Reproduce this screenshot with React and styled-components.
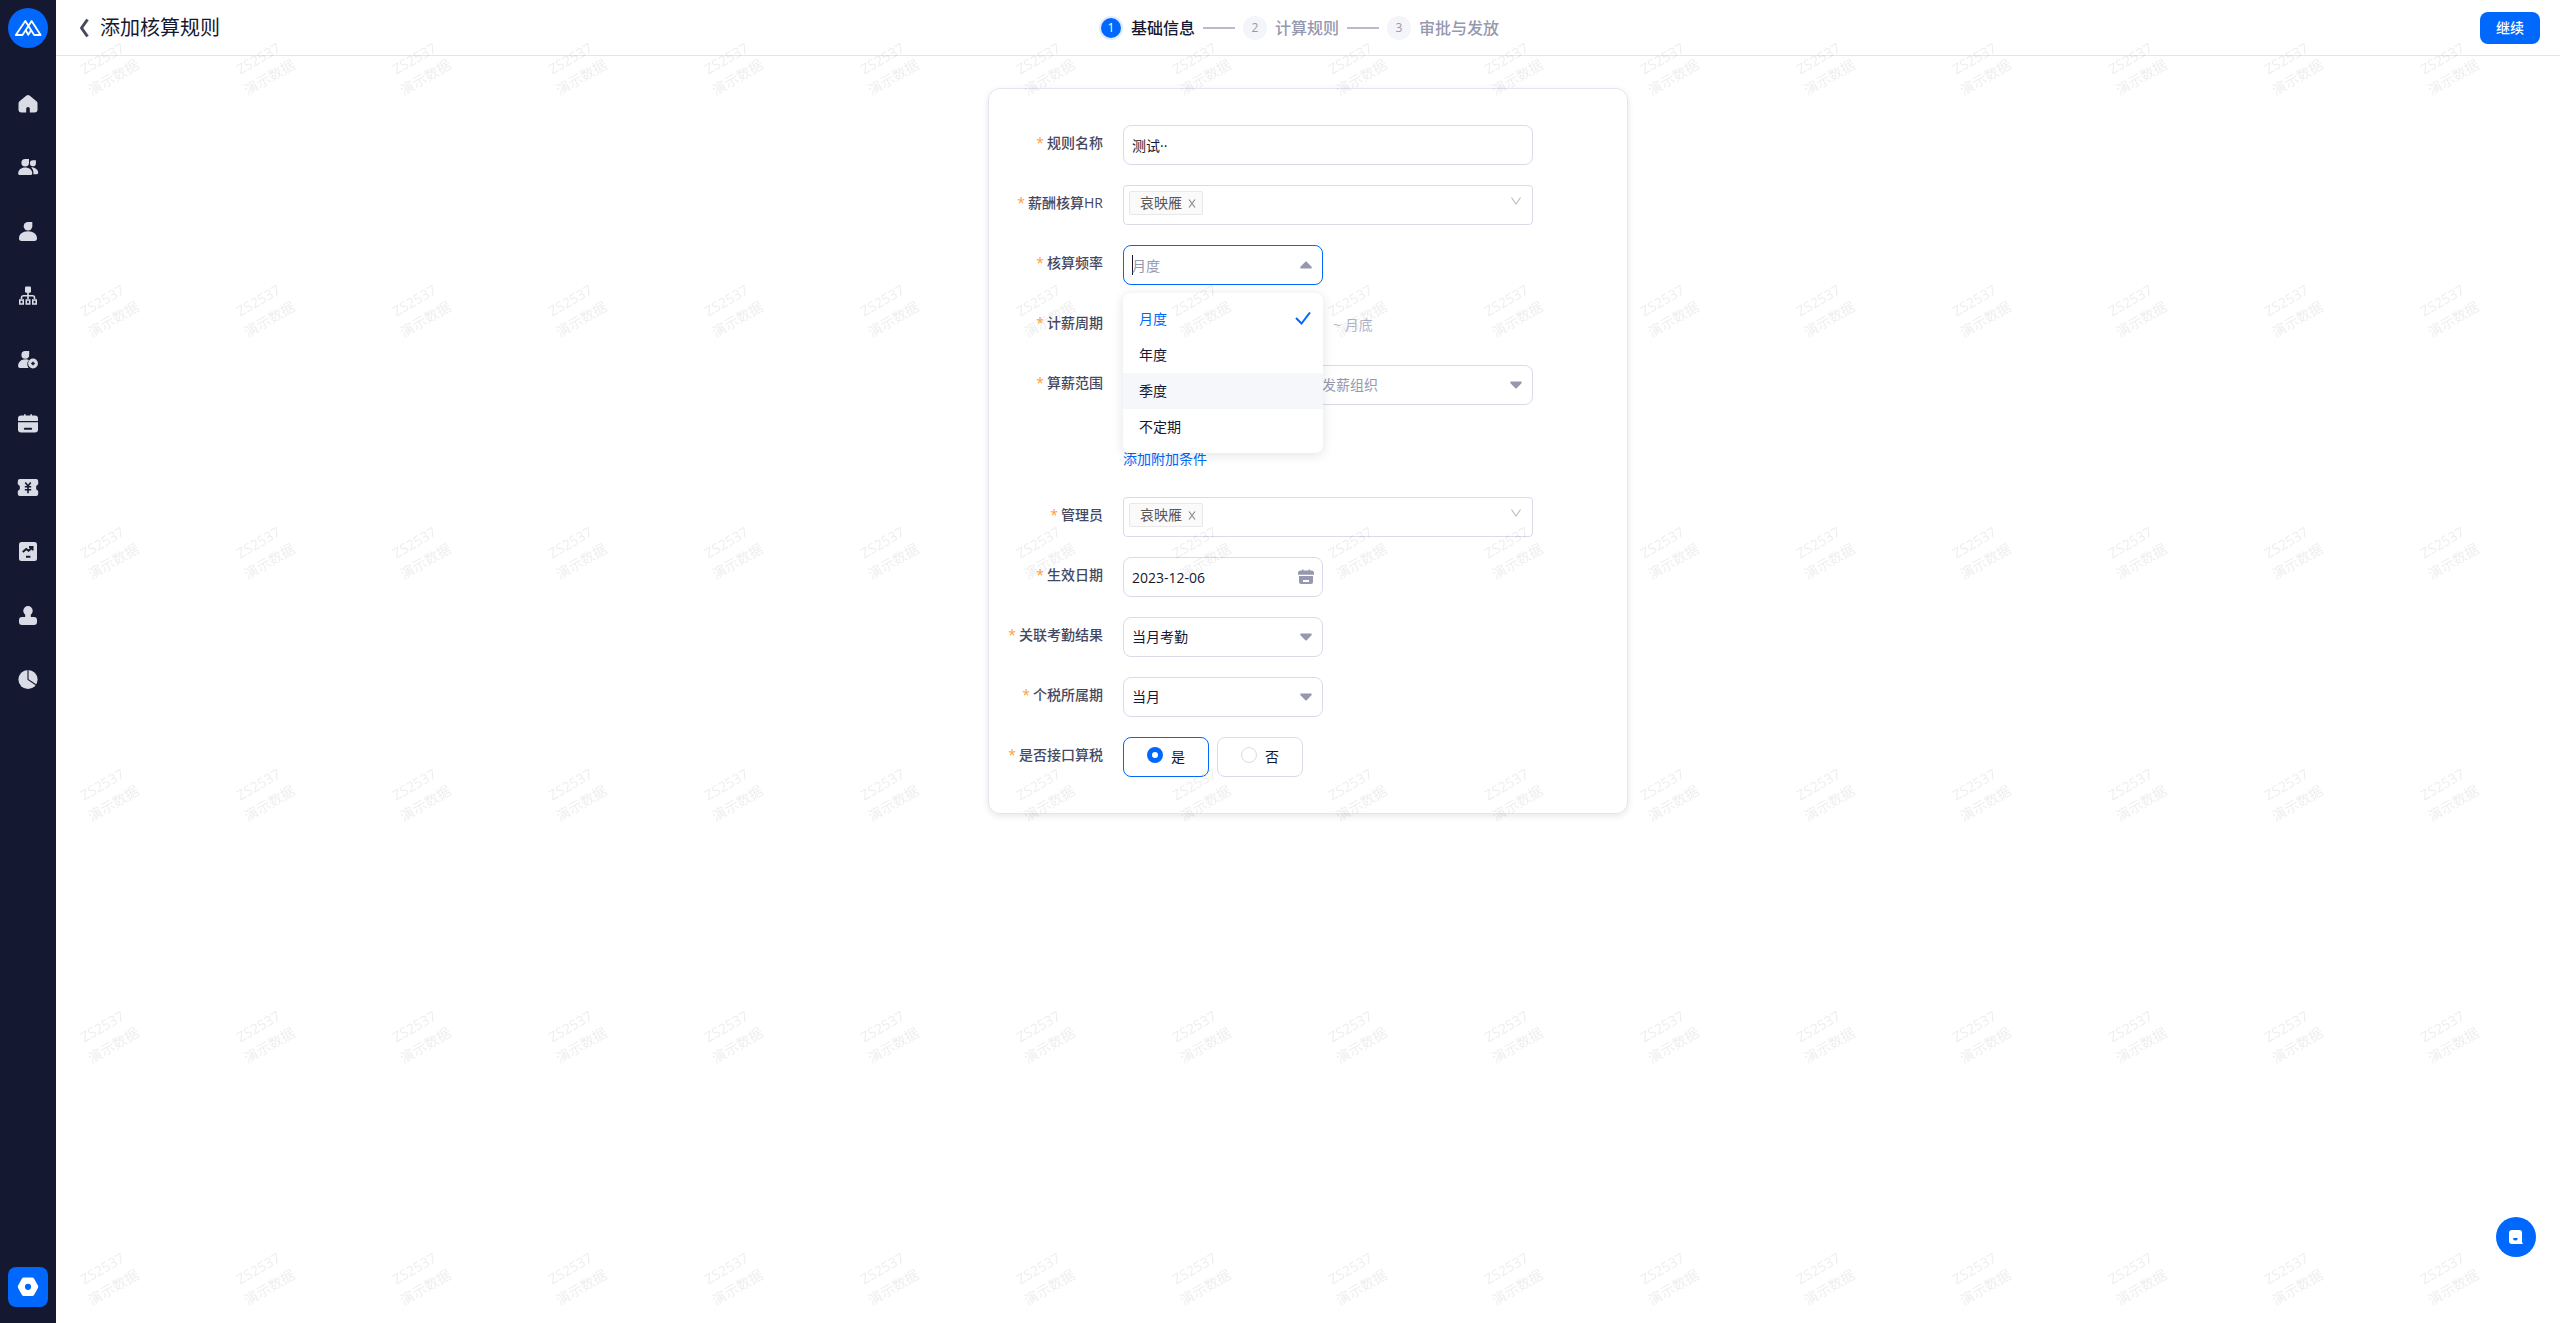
import React from "react";
import styled, { createGlobalStyle, css } from "styled-components";

const navItems = [
  { label: "首页", icon: "home" },
  { label: "员工", icon: "people" },
  { label: "个人", icon: "person" },
  { label: "组织", icon: "org" },
  { label: "招聘", icon: "personAdd" },
  { label: "考勤", icon: "calendar" },
  { label: "薪酬", icon: "ticket" },
  { label: "绩效", icon: "report" },
  { label: "审批", icon: "stamp" },
  { label: "报表", icon: "pie" },
];

const steps = ["基础信息", "计算规则", "审批与发放"];

const frequencies = ["月度", "年度", "季度", "不定期"];

const WATERMARK_TILES = 96;

//? Icons
const dark = "#141830";

const icons = {
  home: (
    <path d='M8.5 1.6a2.4 2.4 0 0 1 3 0l7 5.6c.7.6 1 1.3 1 2.2v6.1a3 3 0 0 1-3 3h-4.700V14.800a1.800 1.800 0 0 0-3.600 0v3.700H3.500a3 3 0 0 1-3-3V9.400c0-.9.4-1.700 1-2.200z' />
  ),
  people: (
    <>
      <path d='M7.2 1H11v3.800A3.800 3.800 0 1 1 7.200 1z' />
      <path d='M7.200 9.400c4 0 7 2.400 7 5.800 0 1.200-.7 1.900-1.900 1.900H2.100C.9 17.100.2 16.400.2 15.200c0-3.400 3-5.800 7-5.800z' />
      <path d='M15 2.300h2.900v2.900A3 3 0 1 1 15 2.300z' />
      <path d='M13.200 9.300c4 0 7 2.600 7 5.200 0 1-.5 1.700-1.500 1.700h-3.300c.3-2.900-.6-5.200-2.200-6.900z' />
    </>
  ),
  person: (
    <>
      <path d='M10 0h4.300v4.200A4.300 4.200 0 1 1 10 0z' />
      <path d='M10 9.300c5.400 0 9 2.900 9 7 0 1.800-.9 2.700-2.600 2.700H3.600C1.900 19 1 18.100 1 16.300c0-4.100 3.600-7 9-7z' />
    </>
  ),
  org: (
    <>
      <path d='M8 .6h4a1 1 0 0 1 1 1v3.600a1.500 1.500 0 0 1-1.500 1.500h-3A1.500 1.500 0 0 1 7 5.200V1.600a1 1 0 0 1 1-1z' />
      <path
        d='M10 5v8M3.500 13v-1.200A2 2 0 0 1 5.500 9.800h9a2 2 0 0 1 2 2V13M1.800 14h3.400v4H1.800zM8.300 14h3.400v4H8.300zM14.800 14h3.400v4h-3.400z'
        fill='none'
        stroke='currentColor'
        strokeWidth='1.600'
      />
    </>
  ),
  personAdd: (
    <>
      <path d='M7.500 1h3.700v4A3.900 3.900 0 1 1 7.500 1z' />
      <path d='M7.500 9.200c1.500 0 2.400.2 3.500.8-2.100 2-2.300 5-.5 7.900H2C.8 17.900.1 17.200.1 16c0-4 3-6.800 7.400-6.800z' />
      <circle cx='15' cy='13.500' r='4.900' />
      <path d='M15 11.700v3.600M13.200 13.500h3.600' stroke={dark} strokeWidth='1.500' />
    </>
  ),
  calendar: (
    <>
      <path d='M3 1.400h3V.3h1.600v1.100h4.800V.3H14v1.100h3a3 3 0 0 1 3 3V7H0V4.400a3 3 0 0 1 3-3z' />
      <path d='M0 8.200h20v7.400a3 3 0 0 1-3 3H3a3 3 0 0 1-3-3z' />
      <path d='M6.800 14.700h6.400' stroke={dark} strokeWidth='2' strokeLinecap='round' />
    </>
  ),
  ticket: (
    <>
      <path d='M2.200 1h15.600A2.200 2.200 0 0 1 20.200 3v3.200L18.200 8v3.200l2 1.800v3a2.200 2.200 0 0 1-2.400 2H2.200A2.200 2.200 0 0 1-.2 16v-3l2-1.800V8l-2-1.800V3A2.200 2.200 0 0 1 2.200 1z' />
      <path
        d='M7.300 4.500 10 8l2.700-3.500M10 8v7.300M6.800 8.800h6.400M6.800 11.800h6.400'
        fill='none'
        stroke={dark}
        strokeWidth='1.600'
      />
    </>
  ),
  report: (
    <>
      <rect x='1' y='0' width='18' height='19' rx='2.500' />
      <path
        d='m4.800 10 3.400-3 2.400 1.800L14 5.500M11 5h3.600v3.600M8 14.700h4.400'
        fill='none'
        stroke={dark}
        strokeWidth='1.900'
      />
    </>
  ),
  stamp: (
    <path d='M10 0a4.700 4.700 0 0 1 4.700 4.700c0 1.800-1 3-1.900 4v2.300H16a3 3 0 0 1 3 3V16a3 3 0 0 1-3 3H4a3 3 0 0 1-3-3v-2a3 3 0 0 1 3-3h3.200V8.700c-.9-1-1.900-2.200-1.900-4A4.700 4.700 0 0 1 10 0z' />
  ),
  pie: (
    <>
      <circle cx='10' cy='9.500' r='9.600' />
      <path d='M10 0v9.500l7.800 5.300' fill='none' stroke={dark} strokeWidth='1.100' />
    </>
  ),
};

const Logo = () => (
  <svg width='40' height='40' viewBox='0 0 40 40' aria-hidden='true'>
    <g
      fill='none'
      stroke='#fff'
      strokeWidth='1.800'
      strokeLinejoin='round'
      strokeLinecap='round'
    >
      <path d='M14.500 27H7.800l9.500-14 8.900 14h6.400L23.600 13z' />
      <path d='m17.900 22.500 2.400 4.300 2.600-4.300' />
    </g>
  </svg>
);

const CaretIcon = ({ up }) => (
  <svg width='12' height='8' viewBox='0 0 12 8' fill='#9698b0' aria-hidden='true'>
    {up ? (
      <path d='M5.300.8a1 1 0 0 1 1.400 0l4.800 5c.6.600.2 1.700-.7 1.700H1.200c-.9 0-1.300-1.100-.7-1.700z' />
    ) : (
      <path d='M5.300 7.200a1 1 0 0 0 1.400 0l4.800-5C12.100 1.600 11.700.5 10.800.5H1.200C.3.500-.1 1.600.5 2.200z' />
    )}
  </svg>
);

const ChevronIcon = () => (
  <svg width='12' height='8' viewBox='0 0 12 8' aria-hidden='true'>
    <path d='M1.500.5 6 7 10.500.5' fill='none' stroke='#bfbfbf' strokeWidth='1.200' />
  </svg>
);

const DateIcon = () => (
  <svg width='16' height='16' viewBox='0 0 16 16' fill='#9698b0' aria-hidden='true'>
    <path d='M2.500 1.500H4V.5h1.500v1h5v-1H12v1h1.500A2.500 2.500 0 0 1 16 4v1.800H0V4a2.500 2.500 0 0 1 2.500-2.500z' />
    <path
      fillRule='evenodd'
      d='M1 7h14v6a2 2 0 0 1-2 2H3a2 2 0 0 1-2-2zm4 4v2h6v-2z'
    />
  </svg>
);

//? Form parts
const FormRow = ({ id, label, children }) => (
  <Row>
    <Label htmlFor={id}>
      <Star>*</Star>
      {label}
    </Label>
    <Controls>{children}</Controls>
  </Row>
);

const SelectField = ({ id, width, muted, value, ariaLabel }) => (
  <Field $width={width}>
    <Select id={id} $muted={muted} defaultValue={value} aria-label={ariaLabel}>
      <option>{value}</option>
    </Select>
    <CaretIcon />
  </Field>
);

const PeopleField = ({ id, name }) => (
  <Field $square>
    <Tag>
      {name}
      <TagClose type='button' aria-label={`移除${name}`}>
        <svg width='8' height='10' viewBox='0 0 8 10' aria-hidden='true'>
          <path d='m1 1.500 6 8M7 1.500l-6 8' stroke='#8c8c8c' strokeWidth='1.200' />
        </svg>
      </TagClose>
    </Tag>
    <TextInput id={id} type='text' />
    <ChevronSlot>
      <ChevronIcon />
    </ChevronSlot>
  </Field>
);

const App = () => {
  return (
    <Page>
      <GlobalStyle />
      <Sidebar>
        <LogoLink href='#' aria-label='主页'>
          <Logo />
        </LogoLink>
        <Nav>
          {navItems.map(({ label, icon }) => (
            <NavLink key={icon} href='#' aria-label={label}>
              <svg width='20' height='20' viewBox='0 0 20 20' fill='currentColor' overflow='visible'>
                {icons[icon]}
              </svg>
            </NavLink>
          ))}
        </Nav>
        <SettingsButton type='button' aria-label='设置'>
          <svg width='22' height='20' viewBox='0 0 22 20'>
            <path
              fill='#fff'
              fillRule='evenodd'
              d='M7 .5h8a2.500 2.500 0 0 1 2.200 1.200l3.700 6.800a2.500 2.500 0 0 1 0 2.600l-3.700 6.700A2.500 2.500 0 0 1 15 19H7a2.500 2.500 0 0 1-2.200-1.200L1.100 11.100a2.500 2.500 0 0 1 0-2.600l3.700-6.800A2.500 2.500 0 0 1 7 .5zm4 6.200a3.100 3.100 0 1 0 0 6.200 3.100 3.100 0 0 0 0-6.200z'
            />
          </svg>
        </SettingsButton>
      </Sidebar>

      <Main>
        <Header>
          <TitleGroup>
            <BackButton type='button' aria-label='返回'>
              <svg width='12' height='20' viewBox='0 0 12 20'>
                <path
                  d='M9.500 1.500 3.500 10l6 8.500'
                  fill='none'
                  stroke='#454860'
                  strokeWidth='3'
                  strokeLinejoin='round'
                />
              </svg>
            </BackButton>
            <Title>添加核算规则</Title>
          </TitleGroup>
          <Steps>
            {steps.map((step, index) => (
              <Step key={step} $active={index === 0}>
                <StepNumber $active={index === 0}>{index + 1}</StepNumber>
                {step}
              </Step>
            ))}
          </Steps>
          <ContinueButton type='button'>继续</ContinueButton>
        </Header>

        <Content>
          <Card onSubmit={(e) => e.preventDefault()}>
            <FormRow id='name' label='规则名称'>
              <Field>
                <TextInput id='name' type='text' defaultValue='测试··' />
              </Field>
            </FormRow>
            <FormRow id='hr' label='薪酬核算HR'>
              <PeopleField id='hr' name='哀映雁' />
            </FormRow>
            <FormRow id='frequency' label='核算频率'>
              <DropdownAnchor>
                <Field $active>
                  <TextCursor />
                  <TextInput
                    id='frequency'
                    type='text'
                    role='combobox'
                    aria-expanded='true'
                    aria-controls='frequency-list'
                    placeholder='月度'
                  />
                  <CaretIcon up />
                </Field>
                <Dropdown id='frequency-list' role='listbox'>
                  {frequencies.map((item) => (
                    <Option
                      key={item}
                      role='option'
                      aria-selected={item === "月度"}
                      $selected={item === "月度"}
                      $hovered={item === "季度"}
                    >
                      {item}
                      {item === "月度" && (
                        <svg width='16' height='14' viewBox='0 0 16 14' aria-hidden='true'>
                          <path
                            d='m1 6 5.500 5.500L15 .5'
                            fill='none'
                            stroke='#0168fe'
                            strokeWidth='2'
                          />
                        </svg>
                      )}
                    </Option>
                  ))}
                </Dropdown>
              </DropdownAnchor>
            </FormRow>
            <FormRow id='cycle' label='计薪周期'>
              <SelectField id='cycle' width='200px' value='1日' />
              <Hint>~ 月底</Hint>
            </FormRow>
            <FormRow id='scope' label='算薪范围'>
              <SelectField id='scope' width='180px' value='发薪组织' />
              <SelectField width='220px' value='发薪组织' ariaLabel='发薪组织' muted />
            </FormRow>
            <ExtraRow>
              <a href='#'>添加附加条件</a>
            </ExtraRow>
            <FormRow id='admin' label='管理员'>
              <PeopleField id='admin' name='哀映雁' />
            </FormRow>
            <FormRow id='date' label='生效日期'>
              <Field $width='200px' $icon='wide'>
                <TextInput id='date' type='text' defaultValue='2023-12-06' />
                <DateIcon />
              </Field>
            </FormRow>
            <FormRow id='attendance' label='关联考勤结果'>
              <SelectField id='attendance' width='200px' value='当月考勤' />
            </FormRow>
            <FormRow id='tax' label='个税所属期'>
              <SelectField id='tax' width='200px' value='当月' />
            </FormRow>
            <FormRow id='api-yes' label='是否接口算税'>
              <RadioBox>
                <input id='api-yes' type='radio' name='api' defaultChecked />是
              </RadioBox>
              <RadioBox>
                <input type='radio' name='api' />否
              </RadioBox>
            </FormRow>
          </Card>
        </Content>
      </Main>

      <Watermark aria-hidden='true'>
        {Array.from({ length: WATERMARK_TILES }, (_, index) => (
          <WatermarkTile key={index}>
            <p>
              ZS2537
              <br />
              演示数据
            </p>
          </WatermarkTile>
        ))}
      </Watermark>

      <HelpButton type='button' aria-label='帮助'>
        <svg width='14' height='14' viewBox='0 0 14 14'>
          <path
            fill='#fff'
            fillRule='evenodd'
            d='M3 0h7.500A2.500 2.500 0 0 1 13 2.500V12l1 2H3a3 3 0 0 1-3-3V3a3 3 0 0 1 3-3zm1.200 8v.8a1.800 1.800 0 0 0 1.800 1.700h.8a1.800 1.800 0 0 0 1.800-1.700V8z'
          />
        </svg>
      </HelpButton>
    </Page>
  );
};

const GlobalStyle = createGlobalStyle`
  *,
  *::before,
  *::after {
    box-sizing: border-box;
  }

  body {
    margin: 0;
    background: #fff;
    color: #141830;
    font-family: "Open Sans", "Noto Sans CJK SC", sans-serif;
    font-size: 14px;
    line-height: 20px;
  }

  button,
  input,
  select {
    font: inherit;
    color: inherit;
  }

  a {
    color: #0168fe;
    text-decoration: none;
  }

  button {
    padding: 0;
    border: 0;
    background: none;
    cursor: pointer;
  }
`;

const Page = styled.div`
  display: flex;
  min-height: 100vh;
`;

const Sidebar = styled.aside`
  display: flex;
  flex-direction: column;
  align-items: center;
  flex: none;
  width: 56px;
  padding: 8px 8px 16px;
  background: #141830;
`;

const LogoLink = styled.a`
  display: block;
  width: 40px;
  height: 40px;
  border-radius: 50%;
  background: #0168fe;
`;

const Nav = styled.nav`
  display: flex;
  flex-direction: column;
  margin-top: 24px;
`;

const NavLink = styled.a`
  display: grid;
  place-items: center;
  width: 56px;
  height: 64px;
  color: #dadce5;
`;

const SettingsButton = styled.button`
  display: grid;
  place-items: center;
  width: 40px;
  height: 40px;
  margin-top: auto;
  border-radius: 8px;
  background: #0168fe;
`;

const Main = styled.main`
  flex: 1;
  min-width: 0;
`;

const Header = styled.header`
  display: grid;
  grid-template-columns: 1fr auto 1fr;
  align-items: center;
  height: 56px;
  padding: 0 20px;
  border-bottom: 1px solid #e4e4ee;
`;

const TitleGroup = styled.div`
  display: flex;
  align-items: center;
  gap: 8px;
`;

const BackButton = styled.button`
  display: grid;
  place-items: center;
  width: 16px;
  height: 24px;
`;

const Title = styled.h1`
  margin: 0;
  font-size: 20px;
  font-weight: 400;
  line-height: 28px;
`;

const Steps = styled.ol`
  display: flex;
  gap: 8px;
  margin: 0;
  padding: 0 18px 0 0;
  list-style: none;
`;

const Step = styled.li`
  display: flex;
  align-items: center;
  gap: 8px;
  color: ${({ $active }) => ($active ? "#141830" : "#9698b0")};
  font-size: 16px;
  font-weight: 500;
  line-height: 24px;

  &:not(:last-child)::after {
    content: "";
    width: 32px;
    height: 2px;
    background: #b8bacd;
  }
`;

const StepNumber = styled.span`
  width: 24px;
  height: 24px;
  border: 2px solid ${({ $active }) => ($active ? "#dfebff" : "#f4f5fb")};
  border-radius: 50%;
  background: ${({ $active }) => ($active ? "#0168fe" : "#f4f5fb")};
  color: ${({ $active }) => ($active ? "#fff" : "#9698b0")};
  font-size: 12px;
  line-height: 20px;
  text-align: center;
`;

const ContinueButton = styled.button`
  justify-self: end;
  width: 60px;
  height: 32px;
  border-radius: 8px;
  background: #0168fe;
  color: #fff;
  font-weight: 500;
`;

const Content = styled.div`
  display: flex;
  justify-content: center;
  padding: 32px 20px;
`;

const Card = styled.form`
  display: grid;
  gap: 20px;
  width: 100%;
  max-width: 640px;
  padding: 36px 94px 36px 0;
  border: 1px solid #e4e5f0;
  border-radius: 12px;
  box-shadow: 0 2px 6px rgba(20, 24, 48, 0.1);
`;

const Row = styled.div`
  display: grid;
  grid-template-columns: 114px 1fr;
  column-gap: 20px;
`;

const Label = styled.label`
  color: #454860;
  font-weight: 500;
  line-height: 36px;
  text-align: right;
  white-space: nowrap;
`;

const Star = styled.span`
  margin-right: 3px;
  color: #ff9d3c;
  font-weight: 400;
`;

const Controls = styled.div`
  display: flex;
  align-items: center;
  gap: 10px;
`;

const Field = styled.div`
  display: flex;
  align-items: center;
  width: ${({ $width }) => $width || "100%"};
  height: 40px;
  padding: 0 ${({ $icon }) => ($icon === "wide" ? 8 : 10)}px 0 8px;
  border: 1px solid #dadbe8;
  border-radius: 8px;
  background: #fff;

  ${({ $square }) =>
    $square &&
    css`
      padding-left: 5px;
      border-radius: 4px;
    `}

  ${({ $active }) =>
    $active &&
    css`
      border-color: #0168fe;
    `}
`;

const controlStyles = css`
  flex: 1;
  min-width: 0;
  height: 38px;
  padding: 0;
  border: 0;
  outline: 0;
  background: transparent;
`;

const TextInput = styled.input`
  ${controlStyles}

  &::placeholder {
    color: #9698b0;
    opacity: 1;
  }
`;

const Select = styled.select`
  ${controlStyles}
  appearance: none;
  color: ${({ $muted }) => ($muted ? "#9698b0" : "inherit")};
`;

const TextCursor = styled.span`
  width: 1px;
  height: 20px;
  margin-right: -1px;
  background: #141830;
`;

const Tag = styled.span`
  display: flex;
  align-items: center;
  gap: 6px;
  height: 24px;
  margin-bottom: 4px;
  padding: 0 6px 0 10px;
  border: 1px solid #e8e8e8;
  border-radius: 2px;
  background: #fafafa;
  color: #595959;
`;

const TagClose = styled.button`
  display: grid;
  place-items: center;
  width: 8px;
  height: 20px;
`;

const ChevronSlot = styled.span`
  display: grid;
  margin-bottom: 8px;
`;

const DropdownAnchor = styled.div`
  position: relative;
  width: 200px;
`;

const Dropdown = styled.ul`
  position: absolute;
  top: 48px;
  left: 0;
  z-index: 2;
  width: 100%;
  margin: 0;
  padding: 8px 0;
  border-radius: 8px;
  background: #fff;
  box-shadow: 0 2px 12px rgba(20, 24, 48, 0.12);
  list-style: none;
`;

const Option = styled.li`
  display: flex;
  align-items: center;
  justify-content: space-between;
  height: 36px;
  padding: 0 12px 0 16px;
  background: ${({ $hovered }) => ($hovered ? "#f6f7fa" : "transparent")};
  color: ${({ $selected }) => ($selected ? "#0168fe" : "inherit")};
`;

const Hint = styled.span`
  color: #b4b5c8;
`;

const ExtraRow = styled.div`
  padding: 24px 0 8px 134px;
`;

const RadioBox = styled.label`
  display: flex;
  align-items: center;
  justify-content: center;
  gap: 8px;
  width: 86px;
  height: 40px;
  margin-right: -2px;
  border: 1px solid #dadbe8;
  border-radius: 8px;

  &:has(input:checked) {
    border-color: #0168fe;
  }

  input {
    appearance: none;
    width: 16px;
    height: 16px;
    margin: 0 0 4px;
    border: 1px solid #dadbe8;
    border-radius: 50%;
    background: #fff;
  }

  input:checked {
    border: 5px solid #0168fe;
  }
`;

const Watermark = styled.div`
  position: fixed;
  inset: 0 0 0 56px;
  z-index: 5;
  display: grid;
  grid-template-columns: repeat(auto-fill, 156px);
  grid-auto-rows: 242px;
  overflow: hidden;
  pointer-events: none;
`;

const WatermarkTile = styled.div`
  padding-top: 46px;

  p {
    width: 104px;
    margin: 0;
    color: rgba(20, 24, 48, 0.08);
    line-height: 22px;
    text-align: center;
    transform: rotate(-30deg);
  }
`;

const HelpButton = styled.button`
  position: fixed;
  right: 24px;
  bottom: 66px;
  z-index: 6;
  display: grid;
  place-items: center;
  width: 40px;
  height: 40px;
  border-radius: 50%;
  background: #0168fe;
`;

export default App;
